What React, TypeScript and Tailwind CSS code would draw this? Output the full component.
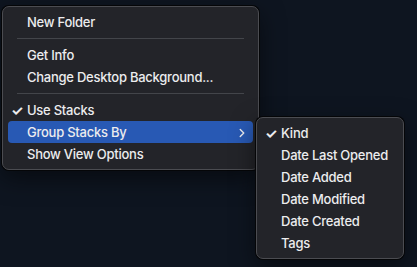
import { ChevronRight } from 'lucide-react';

type Item = { label: string; checked?: boolean; active?: boolean; submenu?: boolean } | 'sep';

const MAIN: Item[] = [
  { label: 'New Folder' },
  'sep',
  { label: 'Get Info' },
  { label: 'Change Desktop Background...' },
  'sep',
  { label: 'Use Stacks', checked: true },
  { label: 'Group Stacks By', active: true, submenu: true },
  { label: 'Show View Options' },
];

const SUB: Item[] = [
  { label: 'Kind', checked: true },
  { label: 'Date Last Opened' },
  { label: 'Date Added' },
  { label: 'Date Modified' },
  { label: 'Date Created' },
  { label: 'Tags' },
];

function Menu({ items }: { items: Item[] }) {
  return (
    <div className="rounded-[7px] border border-[#4b4c51] bg-[#232429] px-[5px] py-[4px] shadow-[0_0_0_1px_#050608,0_8px_24px_rgba(0,0,0,0.5)]">
      {items.map((it, i) =>
        it === 'sep' ? (
          <div key={i} className="flex h-[11px] items-center px-[9px]">
            <div className="h-px w-full bg-[#43454a]" />
          </div>
        ) : (
          <div
            key={i}
            className={`flex h-[22px] items-center rounded-[4px] pr-[4px] pt-px ${
              it.active ? 'bg-[#2859b4]' : ''
            }`}
          >
            <span className="w-[19px] shrink-0 pl-[3px] text-[14px] font-bold text-[#ececee]">
              {it.checked ? '✓' : ''}
            </span>
            <span className="flex-1 whitespace-nowrap text-[13px] font-medium tracking-[-0.25px] text-[#ececee]">
              {it.label}
            </span>
            {it.submenu && <ChevronRight className="h-[14px] w-[14px] text-[#ececee]" strokeWidth={2.4} />}
          </div>
        )
      )}
    </div>
  );
}

export default function App() {
  return (
    <div
      className="relative h-[267px] w-[417px] overflow-hidden bg-[#0e1520]"
      style={{ fontFamily: 'Inter, "Liberation Sans", sans-serif' }}
    >
      <div className="absolute left-[2px] top-[6px] w-[257px]">
        <Menu items={MAIN} />
      </div>
      <div className="absolute left-[256px] top-[117px] w-[148px]">
        <Menu items={SUB} />
      </div>
    </div>
  );
}
